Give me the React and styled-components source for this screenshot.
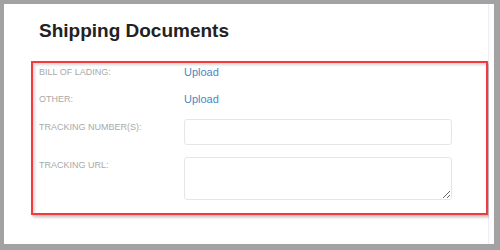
import React from 'react';
import styled, { createGlobalStyle } from 'styled-components';

const Global = createGlobalStyle`
  html, body {
    margin: 0;
    background: #a2a2a2;
  }
  #root {
    padding: 4px 6px 6px 4px;
  }
`;

const Frame = styled.div`
  height: 240px;
  display: flex;
  background: #fff;
  font-family: "Liberation Sans", Arial, sans-serif;
`;

const Main = styled.div`
  flex: 1;
  padding-top: 16px;
  border-right: 1px solid #efeff3;
`;

const Side = styled.div`
  width: 8px;
  background: #fcfcfe;
`;

const Title = styled.h1`
  margin: 0;
  padding-left: 35px;
  font-size: 19px;
  line-height: 22px;
  font-weight: bold;
  color: #222;
`;

const Highlight = styled.div`
  margin: 19px 0 0 27px;
  width: 433px;
  border: 2px solid #f53a3f;
  box-shadow: 2px 2px 3px rgba(0, 0, 0, 0.28), inset 2px 2px 3px rgba(0, 0, 0, 0.16);
  padding: 3px 14px 13px 6px;
`;

const Form = styled.div`
  display: grid;
  grid-template-columns: 145px 268px;
  grid-template-rows: 27px 26px 38px 43px;
  align-items: start;
`;

const Label = styled.div`
  font-size: 9px;
  line-height: 12px;
  color: #a9a9a9;
  text-transform: uppercase;
  padding-top: ${p => p.$offset || 0}px;
`;

const Link = styled.a`
  font-size: 11px;
  line-height: 12px;
  color: #4a88c4;
  text-decoration: none;
  cursor: pointer;
`;

const Field = styled.input`
  box-sizing: border-box;
  width: 268px;
  height: 26px;
  margin: 0;
  border: 1px solid #e6e6e6;
  border-radius: 3px;
  background: #fff;
  font: 11px "Liberation Sans", Arial, sans-serif;
  outline: none;
`;

const Area = styled.textarea`
  box-sizing: border-box;
  width: 268px;
  height: 43px;
  margin: 0;
  border: 1px solid #e6e6e6;
  border-radius: 3px;
  background: #fff;
  font: 11px "Liberation Sans", Arial, sans-serif;
  outline: none;
  display: block;
`;

export default function App() {
  return (
    <>
      <Global />
      <Frame>
        <Main>
          <Title>Shipping Documents</Title>
          <Highlight>
            <Form>
              <Label>Bill of Lading:</Label>
              <Link>Upload</Link>
              <Label>Other:</Label>
              <Link>Upload</Link>
              <Label $offset={2}>Tracking Number(s):</Label>
              <Field type="text" />
              <Label $offset={2}>Tracking URL:</Label>
              <Area />
            </Form>
          </Highlight>
        </Main>
        <Side />
      </Frame>
    </>
  );
}
